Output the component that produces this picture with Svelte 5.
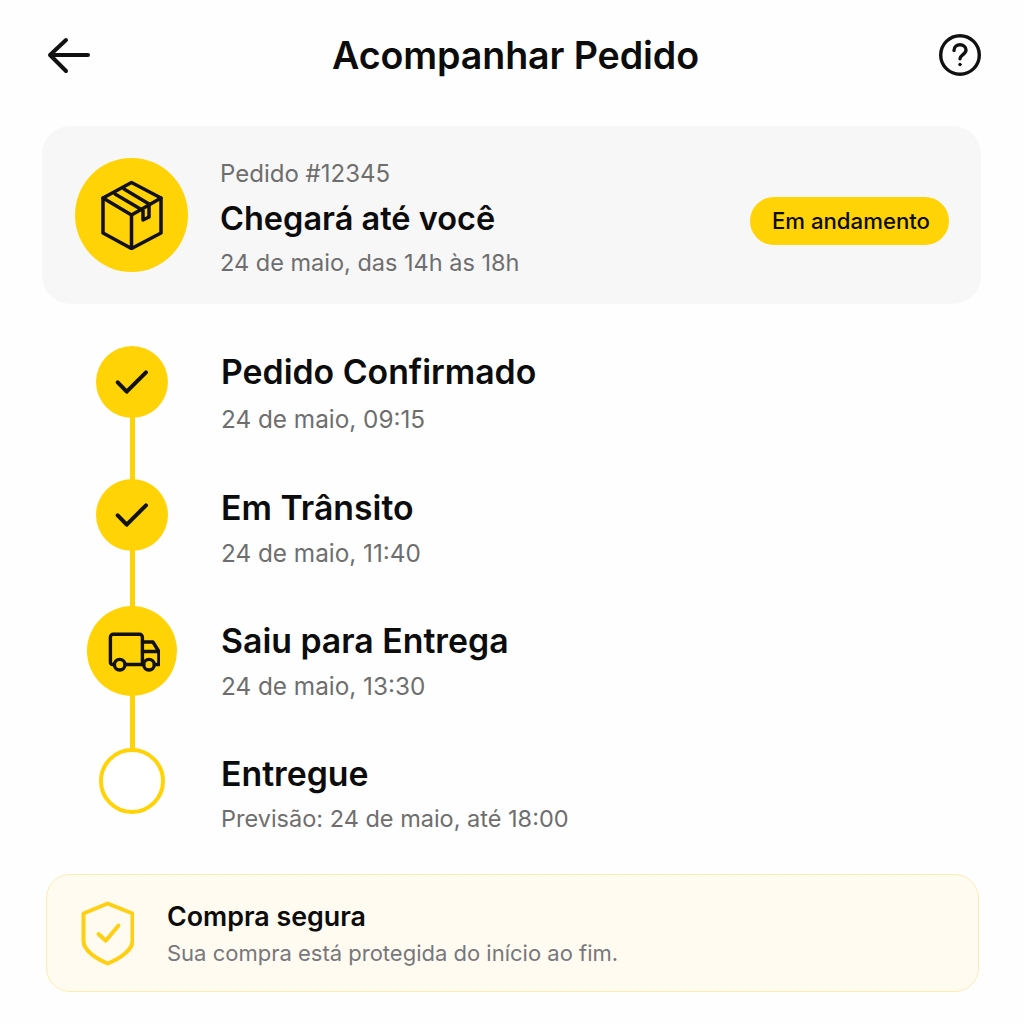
<script lang="ts">
    const steps = [
        { title: "Pedido Confirmado", sub: "24 de maio, 09:15", kind: "done" },
        { title: "Em Trânsito", sub: "24 de maio, 11:40", kind: "done" },
        { title: "Saiu para Entrega", sub: "24 de maio, 13:30", kind: "active" },
        { title: "Entregue", sub: "Previsão: 24 de maio, até 18:00", kind: "pending" },
    ];
</script>

<div class="page">
    <header class="topbar">
        <button class="icon-btn" aria-label="Voltar">
            <svg width="48" height="40" viewBox="45 35 48 40" fill="none" stroke="#111" stroke-width="4" stroke-linecap="round" stroke-linejoin="round">
                <path d="M88 55H50M66 40 50 55l16 16" />
            </svg>
        </button>
        <h1>Acompanhar Pedido</h1>
        <button class="icon-btn" aria-label="Ajuda">
            <svg width="44" height="44" viewBox="0 0 44 44" fill="none" stroke="#111" stroke-width="3.400" stroke-linecap="round" stroke-linejoin="round">
                <circle cx="22" cy="22" r="19.300" />
                <path d="M16 17.500c0-3.600 2.800-5.700 6-5.700s6 2.200 6 5.200c0 4.300-6 4.800-6 8.800" />
                <circle cx="22" cy="31.500" r="1.300" fill="#111" stroke-width="1" />
            </svg>
        </button>
    </header>

    <section class="summary">
        <div class="summary-icon">
            <svg width="62" height="70" viewBox="60 60 62 70" fill="none" stroke="#111" stroke-width="3.500" stroke-linecap="round" stroke-linejoin="round">
                <path d="M90.500 62.500 120 78v35l-29.500 15.500L62 113V78z" />
                <path d="M62 78l28.500 17L120 78M90.500 95v33.500" />
                <path d="M74 74l28 16.500V100l6-3V84L83 69" />
            </svg>
        </div>
        <div class="summary-text">
            <span class="order-no">Pedido #12345</span>
            <strong>Chegará até você</strong>
            <span class="eta">24 de maio, das 14h às 18h</span>
        </div>
        <span class="badge">Em andamento</span>
    </section>

    <ol class="steps">
        {#each steps as step}
            <li class="step {step.kind}">
                <div class="marker-col">
                    <div class="marker">
                        {#if step.kind === "done"}
                            <svg width="40" height="40" viewBox="32 22 40 40" fill="none" stroke="#111" stroke-width="4" stroke-linecap="round" stroke-linejoin="round">
                                <path d="M37.700 42.300l9 9.400L66 32.300" />
                            </svg>
                        {:else if step.kind === "active"}
                            <svg width="56" height="42" viewBox="34.300 40 56 42" fill="none" stroke="#111" stroke-width="3.400" stroke-linecap="round" stroke-linejoin="round">
                                <path d="M44.500 74.500h-1.800a2.500 2.500 0 0 1-2-2.500V47a2.700 2.700 0 0 1 2.700-2.700h26.600a2.700 2.700 0 0 1 2.700 2.700v27.500H55.500" />
                                <path d="M72.700 52h10.500l6 9.500v13h-4.500M73 74.500h1M72.700 61.500h16.500" />
                                <circle cx="50" cy="74.700" r="5.300" />
                                <circle cx="79.300" cy="74.700" r="5.300" />
                            </svg>
                        {/if}
                    </div>
                </div>
                <div class="step-text">
                    <strong>{step.title}</strong>
                    <span>{step.sub}</span>
                </div>
            </li>
        {/each}
    </ol>

    <section class="secure">
        <svg class="shield" width="54" height="66" viewBox="38 36 54 66" fill="none" stroke="#FFCF14" stroke-width="4" stroke-linecap="round" stroke-linejoin="round">
            <path d="M65.700 39.500 90.500 49.500V77C90.500 86 78 94.500 65.700 99.500 53.500 94.500 41.500 86 41.500 77V49.500z" />
            <path d="M56.500 70l7.300 6.700L76.500 61.500" />
        </svg>
        <div class="secure-text">
            <strong>Compra segura</strong>
            <span>Sua compra está protegida do início ao fim.</span>
        </div>
    </section>
</div>

<style>
    :global(body) {
        margin: 0;
        background: #fefefe;
    }

    .page {
        width: 1024px;
        height: 1024px;
        box-sizing: border-box;
        padding: 0 43px 0 42px;
        font-family: Inter, "Noto Sans", sans-serif;
        color: #0c0c0c;
        overflow: hidden;
    }

    .topbar {
        display: flex;
        align-items: center;
        justify-content: space-between;
        height: 110px;
        margin-right: -1px;
        padding-left: 3px;
    }

    .topbar h1 {
        margin: 0;
        font-size: 37.600px;
        font-weight: 600;
        letter-spacing: -0.1px;
    }

    .icon-btn {
        display: flex;
        padding: 0;
        border: 0;
        background: none;
    }

    .summary {
        display: flex;
        align-items: center;
        height: 178px;
        margin-top: 16px;
        padding: 0 32px 0 33px;
        box-sizing: border-box;
        border-radius: 28px;
        background: #f7f7f7;
    }

    .summary-icon {
        display: flex;
        align-items: center;
        justify-content: center;
        width: 113px;
        height: 114px;
        border-radius: 50%;
        background: #ffd305;
    }

    .summary-text {
        display: flex;
        flex: 1;
        flex-direction: column;
        margin-left: 32px;
        padding-top: 6px;
    }

    .order-no,
    .eta {
        font-size: 24px;
        line-height: 32px;
        color: #6e6e6e;
    }

    .eta {
        font-size: 23.500px;
    }

    .summary-text strong {
        font-size: 32.500px;
        line-height: 57px;
        font-weight: 600;
    }

    .badge {
        margin-top: 12px;
        padding: 0 19px 0 22px;
        height: 48px;
        line-height: 48px;
        border-radius: 24px;
        background: #ffd305;
        font-size: 22.200px;
        font-weight: 500;
    }

    .steps {
        margin: 33px 0 0;
        padding: 0;
        list-style: none;
    }

    .step {
        position: relative;
        display: flex;
        height: 133px;
    }

    /* connector to the next marker, sits behind the circles */
    .step:not(:last-child)::before {
        content: "";
        position: absolute;
        top: 45px;
        left: 87.500px;
        width: 5px;
        height: 133px;
        background: #ffd305;
    }

    .marker-col {
        position: relative;
        display: flex;
        align-items: center;
        justify-content: center;
        width: 180px;
        height: 90px;
    }

    .active .marker-col {
        margin-top: 3px;
    }

    .marker {
        display: flex;
        align-items: center;
        justify-content: center;
        box-sizing: border-box;
        border-radius: 50%;
        background: #ffd305;
    }

    .done .marker {
        width: 72px;
        height: 72px;
    }

    .active .marker {
        width: 90px;
        height: 90px;
    }

    .pending .marker {
        width: 66px;
        height: 66px;
        border: 4px solid #ffd305;
        background: #fff;
    }

    .step-text {
        display: flex;
        flex-direction: column;
        margin-left: -1px;
        padding-top: 13px;
    }

    .step + .step .step-text {
        padding-top: 16px;
    }

    .step-text strong {
        font-size: 33.800px;
        line-height: 44px;
        font-weight: 600;
    }

    .step-text span {
        margin-top: 1px;
        font-size: 24.300px;
        line-height: 44px;
        color: #6e6e6e;
    }

    .step:first-child .step-text span {
        margin-top: 3px;
    }

    .pending .step-text span {
        font-size: 23.500px;
    }

    .secure {
        display: flex;
        align-items: center;
        height: 118px;
        margin: 5px 2px 0 4px;
        padding-left: 33px;
        box-sizing: border-box;
        border: 1.500px solid #ffecb2;
        border-radius: 24px;
        background: #fffbf0;
    }

    .secure-text {
        display: flex;
        flex-direction: column;
        margin-left: 33px;
        padding-top: 2px;
    }

    .secure-text strong {
        font-size: 26.800px;
        line-height: 38px;
        font-weight: 600;
    }

    .secure-text span {
        font-size: 22px;
        line-height: 36px;
        color: #77777c;
    }
</style>
